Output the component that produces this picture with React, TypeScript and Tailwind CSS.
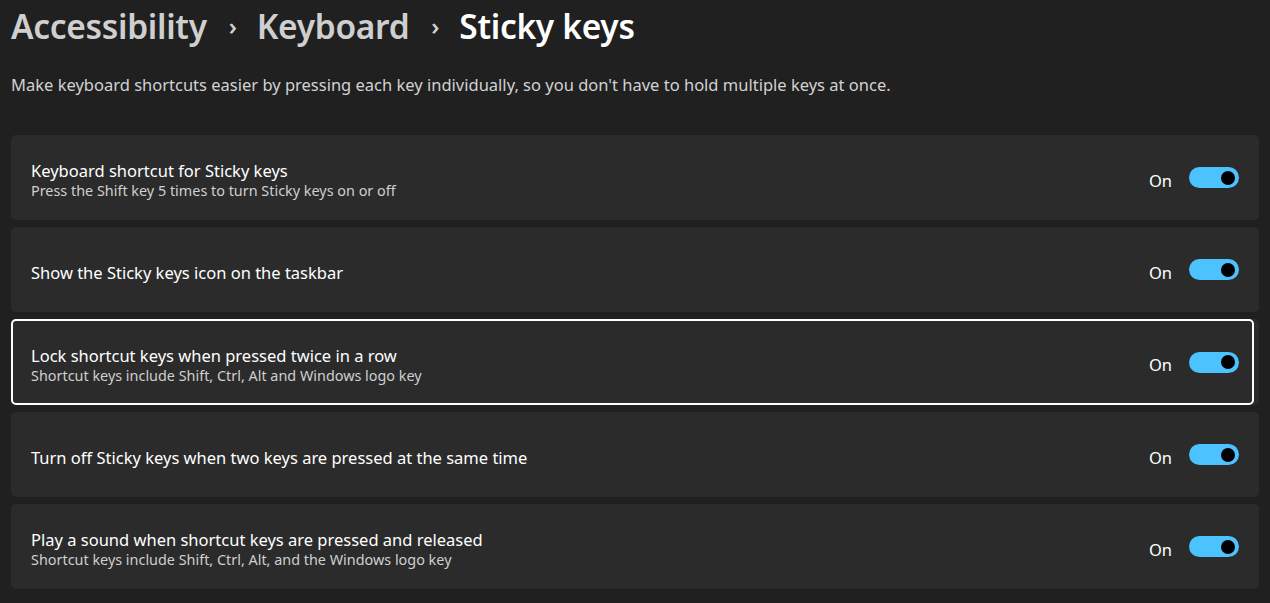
import React from "react";

type Row = { title: string; sub?: string; focused?: boolean };

const rows: Row[] = [
  { title: "Keyboard shortcut for Sticky keys", sub: "Press the Shift key 5 times to turn Sticky keys on or off" },
  { title: "Show the Sticky keys icon on the taskbar" },
  { title: "Lock shortcut keys when pressed twice in a row", sub: "Shortcut keys include Shift, Ctrl, Alt and Windows logo key", focused: true },
  { title: "Turn off Sticky keys when two keys are pressed at the same time" },
  { title: "Play a sound when shortcut keys are pressed and released", sub: "Shortcut keys include Shift, Ctrl, Alt, and the Windows logo key" },
];

function Toggle() {
  return (
    <div className="w-[50px] h-[21px] rounded-full bg-[#4cc2ff] flex items-center justify-end pr-[4px]">
      <div className="w-[14px] h-[14px] rounded-full bg-black" />
    </div>
  );
}

function Content({ r }: { r: Row }) {
  return (
    <>
      <div className="flex flex-col pt-[7px]">
        <div className="text-[16.5px] leading-[20px] text-white">{r.title}</div>
        {r.sub && <div className="text-[14.4px] leading-[20px] text-[#cfcfcf]">{r.sub}</div>}
      </div>
      <div className="flex items-center gap-[17px]">
        <span className="text-[16.5px] text-white pt-[7px]">On</span>
        <Toggle />
      </div>
    </>
  );
}

export default function App() {
  return (
    <div
      className="w-[1270px] h-[603px] bg-[#202020] overflow-hidden pl-[11px] pr-[11px]"
      style={{ fontFamily: '"Noto Sans", "Open Sans", sans-serif' }}
    >
      <div className="flex items-center h-[52px] text-[33.5px] font-semibold tracking-[-0.3px]">
        <span className="text-[#cfcfcf]">Accessibility</span>
        <span className="text-[#cfcfcf] text-[24px] ml-[22px] mr-[20px]">›</span>
        <span className="text-[#cfcfcf]">Keyboard</span>
        <span className="text-[#cfcfcf] text-[24px] ml-[22px] mr-[20px]">›</span>
        <span className="text-white">Sticky keys</span>
      </div>
      <div className="mt-[22px] text-[16.5px] leading-[22px] text-[#d2d2d2]">
        Make keyboard shortcuts easier by pressing each key individually, so you don't have to hold multiple keys at once.
      </div>
      <div className="mt-[39px] flex flex-col gap-[7px]">
        {rows.map((r, i) =>
          r.focused ? (
            <div key={i} className="h-[86px] rounded-[5px] bg-[#2b2b2b] flex">
              <div className="flex-1 mr-[5px] rounded-[5px] border-2 border-white flex items-center justify-between pl-[18px] pr-[13px]">
                <Content r={r} />
              </div>
            </div>
          ) : (
            <div key={i} className="h-[85px] rounded-[5px] bg-[#2b2b2b] flex items-center justify-between pl-[20px] pr-[20px]">
              <Content r={r} />
            </div>
          )
        )}
      </div>
    </div>
  );
}
